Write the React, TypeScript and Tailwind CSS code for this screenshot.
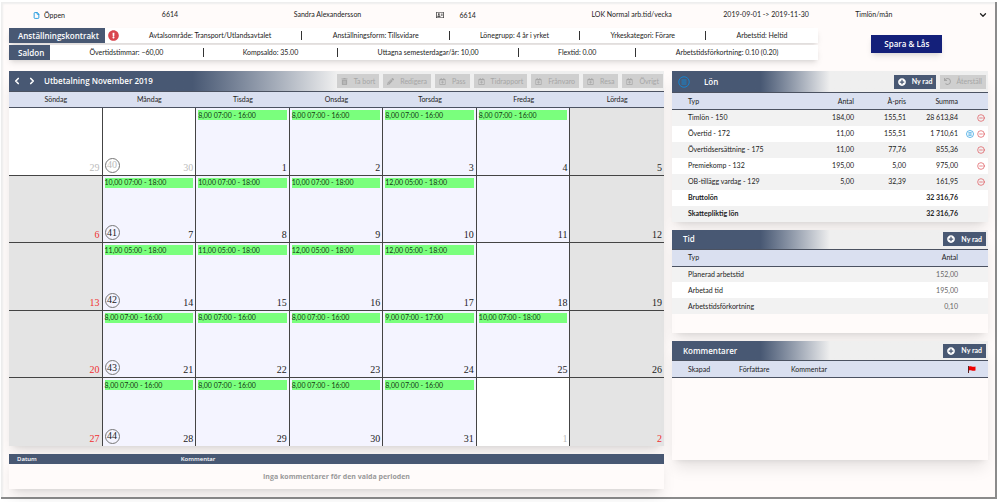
import type { ReactNode } from 'react';
import { ChevronDown, ChevronLeft, ChevronRight, CircleMinus, File } from 'lucide-react';
import { FaExclamationCircle, FaPencilAlt, FaPlusCircle, FaRegAddressCard, FaRegCalendarPlus, FaTrashAlt, FaUndo } from 'react-icons/fa';

const contract = ['Avtalsområde: Transport/Utlandsavtalet', 'Anställningsform: Tillsvidare', 'Lönegrupp: 4 år i yrket', 'Yrkeskategori: Förare', 'Arbetstid: Heltid'];
const balances = ['Övertidstimmar: −60,00', 'Kompsaldo: 35.00', 'Uttagna semesterdagar/år: 10,00', 'Flextid: 0.00', 'Arbetstidsförkortning: 0.10 (0.20)'];

const weekdays = ['Söndag', 'Måndag', 'Tisdag', 'Onsdag', 'Torsdag', 'Fredag', 'Lördag'];

type Day = { day: number; event?: string; kind?: 'work' | 'weekend' | 'holiday' | 'outside' };

const weeks: { week: number; days: Day[] }[] = [
    {
        week: 40,
        days: [
            { day: 29, kind: 'outside' },
            { day: 30, kind: 'outside' },
            { day: 1, event: '8,00 07:00 - 16:00' },
            { day: 2, event: '8,00 07:00 - 16:00' },
            { day: 3, event: '8,00 07:00 - 16:00' },
            { day: 4, event: '8,00 07:00 - 16:00' },
            { day: 5, kind: 'weekend' },
        ],
    },
    {
        week: 41,
        days: [
            { day: 6, kind: 'holiday' },
            { day: 7, event: '10,00 07:00 - 18:00' },
            { day: 8, event: '10,00 07:00 - 18:00' },
            { day: 9, event: '10,00 07:00 - 18:00' },
            { day: 10, event: '12,00 05:00 - 18:00' },
            { day: 11 },
            { day: 12, kind: 'weekend' },
        ],
    },
    {
        week: 42,
        days: [
            { day: 13, kind: 'holiday' },
            { day: 14, event: '11,00 05:00 - 18:00' },
            { day: 15, event: '11,00 05:00 - 18:00' },
            { day: 16, event: '12,00 05:00 - 18:00' },
            { day: 17, event: '12,00 05:00 - 18:00' },
            { day: 18 },
            { day: 19, kind: 'weekend' },
        ],
    },
    {
        week: 43,
        days: [
            { day: 20, kind: 'holiday' },
            { day: 21, event: '8,00 07:00 - 16:00' },
            { day: 22, event: '8,00 07:00 - 16:00' },
            { day: 23, event: '8,00 07:00 - 16:00' },
            { day: 24, event: '9,00 07:00 - 17:00' },
            { day: 25, event: '10,00 07:00 - 18:00' },
            { day: 26, kind: 'weekend' },
        ],
    },
    {
        week: 44,
        days: [
            { day: 27, kind: 'holiday' },
            { day: 28, event: '8,00 07:00 - 16:00' },
            { day: 29, event: '8,00 07:00 - 16:00' },
            { day: 30, event: '8,00 07:00 - 16:00' },
            { day: 31, event: '8,00 07:00 - 16:00' },
            { day: 1, kind: 'outside' },
            { day: 2, kind: 'holiday' },
        ],
    },
];

const dayStyles = {
    work: 'bg-[#f4f4ff] text-[#222]',
    weekend: 'bg-[#e4e4e4] text-[#222]',
    holiday: 'bg-[#e4e4e4] text-[#f03030]',
    outside: 'bg-white text-[#bbb]',
};

const salary = [
    { type: 'Timlön - 150', count: '184,00', price: '155,51', sum: '28 613,84' },
    { type: 'Övertid - 172', count: '11,00', price: '155,51', sum: '1 710,61', details: true },
    { type: 'Övertidsersättning - 175', count: '11,00', price: '77,76', sum: '855,36' },
    { type: 'Premiekomp - 132', count: '195,00', price: '5,00', sum: '975,00' },
    { type: 'OB-tillägg vardag - 129', count: '5,00', price: '32,39', sum: '161,95' },
];

const totals = [
    { type: 'Bruttolön', sum: '32 316,76' },
    { type: 'Skattepliktig lön', sum: '32 316,76' },
];

const times = [
    { type: 'Planerad arbetstid', count: '152,00' },
    { type: 'Arbetad tid', count: '195,00' },
    { type: 'Arbetstidsförkortning', count: '0,10' },
];

const tools = [
    { label: 'Ta bort', icon: FaTrashAlt },
    { label: 'Redigera', icon: FaPencilAlt },
    { label: 'Pass', icon: FaRegCalendarPlus },
    { label: 'Tidrapport', icon: FaRegCalendarPlus },
    { label: 'Frånvaro', icon: FaRegCalendarPlus },
    { label: 'Resa', icon: FaRegCalendarPlus },
    { label: 'Övrigt', icon: FaRegCalendarPlus },
];

const headingFont = "font-['Open_Sans','Noto_Sans',sans-serif]";

function ListCircle({ className }: { className: string }) {
    return (
        <svg viewBox="0 0 24 24" className={className} fill="none" stroke="currentColor" strokeWidth="2">
            <circle cx="12" cy="12" r="10.5" />
            <path d="M7 8h10M7 12h10M7 16h10" />
        </svg>
    );
}

function InfoStrip({ title, items, alert }: { title: string; items: string[]; alert?: boolean }) {
    return (
        <div className="flex h-[15px] items-stretch bg-white shadow-md">
            <h2 className={`flex items-center bg-[#485873] pr-[6px] pl-[9px] text-[8px] font-semibold text-white ${headingFont}`}>{title}</h2>
            {alert && <FaExclamationCircle className="ml-[3px] size-[11px] self-center text-[#d9464f]" />}
            <ul className="flex flex-1 items-center">
                {items.map((item) => (
                    <li key={item} className="flex h-[9px] flex-auto items-center justify-center border-l border-[#333] first:border-l-0">
                        {item}
                    </li>
                ))}
            </ul>
        </div>
    );
}

function NewRowButton() {
    return (
        <button type="button" className="flex h-[14px] items-center gap-[6px] bg-[#485873] px-1 font-bold text-white">
            <FaPlusCircle className="size-2" />
            Ny rad
        </button>
    );
}

function PanelHeader({ title, icon, children }: { title: string; icon?: ReactNode; children: ReactNode }) {
    return (
        <div className={`flex items-center justify-between bg-linear-to-r from-[#485873] from-28% to-[#efefef] to-50% pr-[2px] ${icon ? 'h-[21px]' : 'h-[19px]'}`}>
            <h2 className={`flex items-center text-[8px] font-semibold text-white ${headingFont}`}>
                {icon}
                <span className={icon ? 'ml-[14px]' : 'ml-[11px]'}>{title}</span>
            </h2>
            <div className="flex gap-1">{children}</div>
        </div>
    );
}

const headRow = 'h-[17px] border-y border-[#4b5261] bg-[#dae0f0]';
const bodyRow = 'h-4 odd:bg-[#f2f2f2] even:bg-white';

export default function App() {
    return (
        <div className="bg-white pt-[2px] pr-[2px] pb-[3px] pl-[1px] font-['Lato','Open_Sans',sans-serif] text-[7px] leading-none text-[#222]">
            <div className="border-r-2 border-b-2 border-[#8b8b8b] bg-[#fffbfa] pb-2 pr-[7px] pl-2 shadow-[inset_2px_2px_2px_#eeeeee]">
                <header className="flex h-[26px] items-center pl-[21px]">
                    <div className="mr-[25px] grid flex-1 grid-cols-7">
                        <span className="flex items-center gap-1 pl-[3px]">
                            <File className="size-[7px] text-[#1594dd]" strokeWidth={3} />
                            Öppen
                        </span>
                        <span>6614</span>
                        <span>Sandra Alexandersson</span>
                        <span className="flex items-center gap-4 pl-[10px]">
                            <FaRegAddressCard className="size-2" />
                            6614
                        </span>
                        <span className="pl-[34px]">LOK Normal arb.tid/vecka</span>
                        <span className="pl-[34px]">2019-09-01 -&gt; 2019-11-30</span>
                        <span className="pl-[34px]">Timlön/mån</span>
                    </div>
                    <button type="button" aria-label="Visa mer">
                        <ChevronDown className="size-[10px]" strokeWidth={3} />
                    </button>
                </header>

                <div className="flex items-center">
                    <div className="flex w-[82.6%] flex-col gap-[2px]">
                        <InfoStrip title="Anställningskontrakt" items={contract} alert />
                        <InfoStrip title="Saldon" items={balances} />
                    </div>
                    <div className="flex flex-1 justify-center pl-2">
                        <button type="button" className={`h-[18px] bg-[#14207a] px-[13px] text-[8px] font-semibold text-white shadow-md ${headingFont}`}>
                            Spara &amp; Lås
                        </button>
                    </div>
                </div>

                <main className="mt-[11px] flex items-start gap-2">
                    <div className="flex flex-[655] flex-col gap-2">
                        <section className="shadow-lg">
                            <div className="flex h-5 items-center bg-linear-to-r from-[#485873] from-28% to-[#efefef] to-50% pr-[1px] pl-[3px] text-white">
                                <button type="button" aria-label="Föregående">
                                    <ChevronLeft className="size-[10px]" strokeWidth={4} />
                                </button>
                                <button type="button" aria-label="Nästa" className="ml-[5px]">
                                    <ChevronRight className="size-[10px]" strokeWidth={4} />
                                </button>
                                <h2 className={`ml-[7px] flex-1 text-[8px] font-semibold ${headingFont}`}>Utbetalning November 2019</h2>
                                <div className="flex gap-1">
                                    {tools.map(({ label, icon: Icon }) => (
                                        <button key={label} type="button" disabled className="flex h-[14px] items-center gap-[6px] bg-[#cfcfcf] px-1 text-[#a6a6a6]">
                                            <Icon className="size-[7px]" />
                                            {label}
                                        </button>
                                    ))}
                                </div>
                            </div>
                            <table className="block">
                                <thead className="block">
                                    <tr className="grid h-[17px] grid-cols-7 items-center border-y border-[#4b5261] bg-[#dae0f0]">
                                        {weekdays.map((name) => (
                                            <th key={name} className="font-normal">{name}</th>
                                        ))}
                                    </tr>
                                </thead>
                                <tbody className="grid h-[338px] grid-rows-5">
                                    {weeks.map(({ week, days }) => (
                                        <tr key={week} className="grid grid-cols-7 border-b border-[#444] last:border-b-0">
                                            {days.map(({ day, event, kind = 'work' }, i) => (
                                                <td key={day} className={`flex flex-col justify-between border-r border-[#444] p-[2px] last:border-r-0 ${dayStyles[kind]}`}>
                                                    <div className="h-[10px]">
                                                        {event && <div className="flex h-[10px] items-center bg-[#7aff7d] text-[#123812]">{event}</div>}
                                                    </div>
                                                    <div className="flex items-end justify-between font-['Liberation_Serif',serif] text-[10px]">
                                                        <span>
                                                            {i === 1 && <span className="flex size-[15px] items-center justify-center rounded-full border border-[#777]">{week}</span>}
                                                        </span>
                                                        <span>{day}</span>
                                                    </div>
                                                </td>
                                            ))}
                                        </tr>
                                    ))}
                                </tbody>
                            </table>
                        </section>

                        <section className="shadow-lg">
                            <table className={`w-full table-fixed ${headingFont}`}>
                                <thead>
                                    <tr className="h-[10px] bg-[#485873] text-left text-[6px] text-white">
                                        <th className="w-1/4 pl-2 font-semibold">Datum</th>
                                        <th className="pl-2 font-semibold">Kommentar</th>
                                    </tr>
                                </thead>
                                <tbody>
                                    <tr className="h-[25px]">
                                        <td colSpan={2} className="text-center font-bold text-[#999]">Inga kommentarer för den valda perioden</td>
                                    </tr>
                                </tbody>
                            </table>
                        </section>
                    </div>

                    <aside className="flex flex-[316] flex-col gap-2">
                        <section className="shadow-lg">
                            <PanelHeader title="Lön" icon={<ListCircle className="ml-[6px] size-3 text-[#1583cf]" />}>
                                <NewRowButton />
                                <button type="button" disabled className="flex h-[14px] items-center gap-[5px] bg-[#cfcfcf] px-1 text-[#a6a6a6]">
                                    <FaUndo className="size-[7px]" />
                                    Återställ
                                </button>
                            </PanelHeader>
                            <table className="w-full table-fixed">
                                <thead>
                                    <tr className={headRow}>
                                        <th className="pl-4 text-left font-normal">Typ</th>
                                        <th className="w-[17%] text-right font-normal">Antal</th>
                                        <th className="w-[52px] text-right font-normal">À-pris</th>
                                        <th className="w-[52px] text-right font-normal">Summa</th>
                                        <th className="w-[30px]" />
                                    </tr>
                                </thead>
                                <tbody>
                                    {salary.map((row) => (
                                        <tr key={row.type} className={bodyRow}>
                                            <td className="pl-4">{row.type}</td>
                                            <td className="text-right">{row.count}</td>
                                            <td className="text-right">{row.price}</td>
                                            <td className="text-right">{row.sum}</td>
                                            <td>
                                                <div className="flex justify-end gap-[3px] pr-[3px]">
                                                    {row.details && <ListCircle className="size-2 text-[#1594dd]" />}
                                                    <button type="button" aria-label="Ta bort rad">
                                                        <CircleMinus className="size-2 text-[#dc4a50]" />
                                                    </button>
                                                </div>
                                            </td>
                                        </tr>
                                    ))}
                                    {totals.map((row) => (
                                        <tr key={row.type} className={`${bodyRow} font-bold`}>
                                            <td className="pl-4">{row.type}</td>
                                            <td />
                                            <td />
                                            <td className="text-right">{row.sum}</td>
                                            <td />
                                        </tr>
                                    ))}
                                </tbody>
                            </table>
                        </section>

                        <section className="pb-[19px] shadow-lg">
                            <PanelHeader title="Tid">
                                <NewRowButton />
                            </PanelHeader>
                            <table className="w-full table-fixed">
                                <thead>
                                    <tr className={headRow}>
                                        <th className="pl-4 text-left font-normal">Typ</th>
                                        <th className="pr-[30px] text-right font-normal">Antal</th>
                                    </tr>
                                </thead>
                                <tbody>
                                    {times.map((row) => (
                                        <tr key={row.type} className={bodyRow}>
                                            <td className="pl-4">{row.type}</td>
                                            <td className="pr-[30px] text-right text-[#666]">{row.count}</td>
                                        </tr>
                                    ))}
                                </tbody>
                            </table>
                        </section>

                        <section className="pb-[82px] shadow-lg">
                            <PanelHeader title="Kommentarer">
                                <NewRowButton />
                            </PanelHeader>
                            <table className="w-full table-fixed">
                                <thead>
                                    <tr className={`${headRow} text-left`}>
                                        <th className="w-[67px] pl-4 font-normal">Skapad</th>
                                        <th className="w-[52px] font-normal">Författare</th>
                                        <th className="font-normal">Kommentar</th>
                                        <th className="w-5">
                                            <svg viewBox="0 0 16 14" className="h-[7px] w-2">
                                                <path d="M1 0v14" stroke="#5a2222" strokeWidth="2" />
                                                <path d="M2 1c4-2 6 2 13 0v8c-7 2-9-2-13 0z" fill="#f00000" />
                                            </svg>
                                        </th>
                                    </tr>
                                </thead>
                            </table>
                        </section>
                    </aside>
                </main>
            </div>
        </div>
    );
}
